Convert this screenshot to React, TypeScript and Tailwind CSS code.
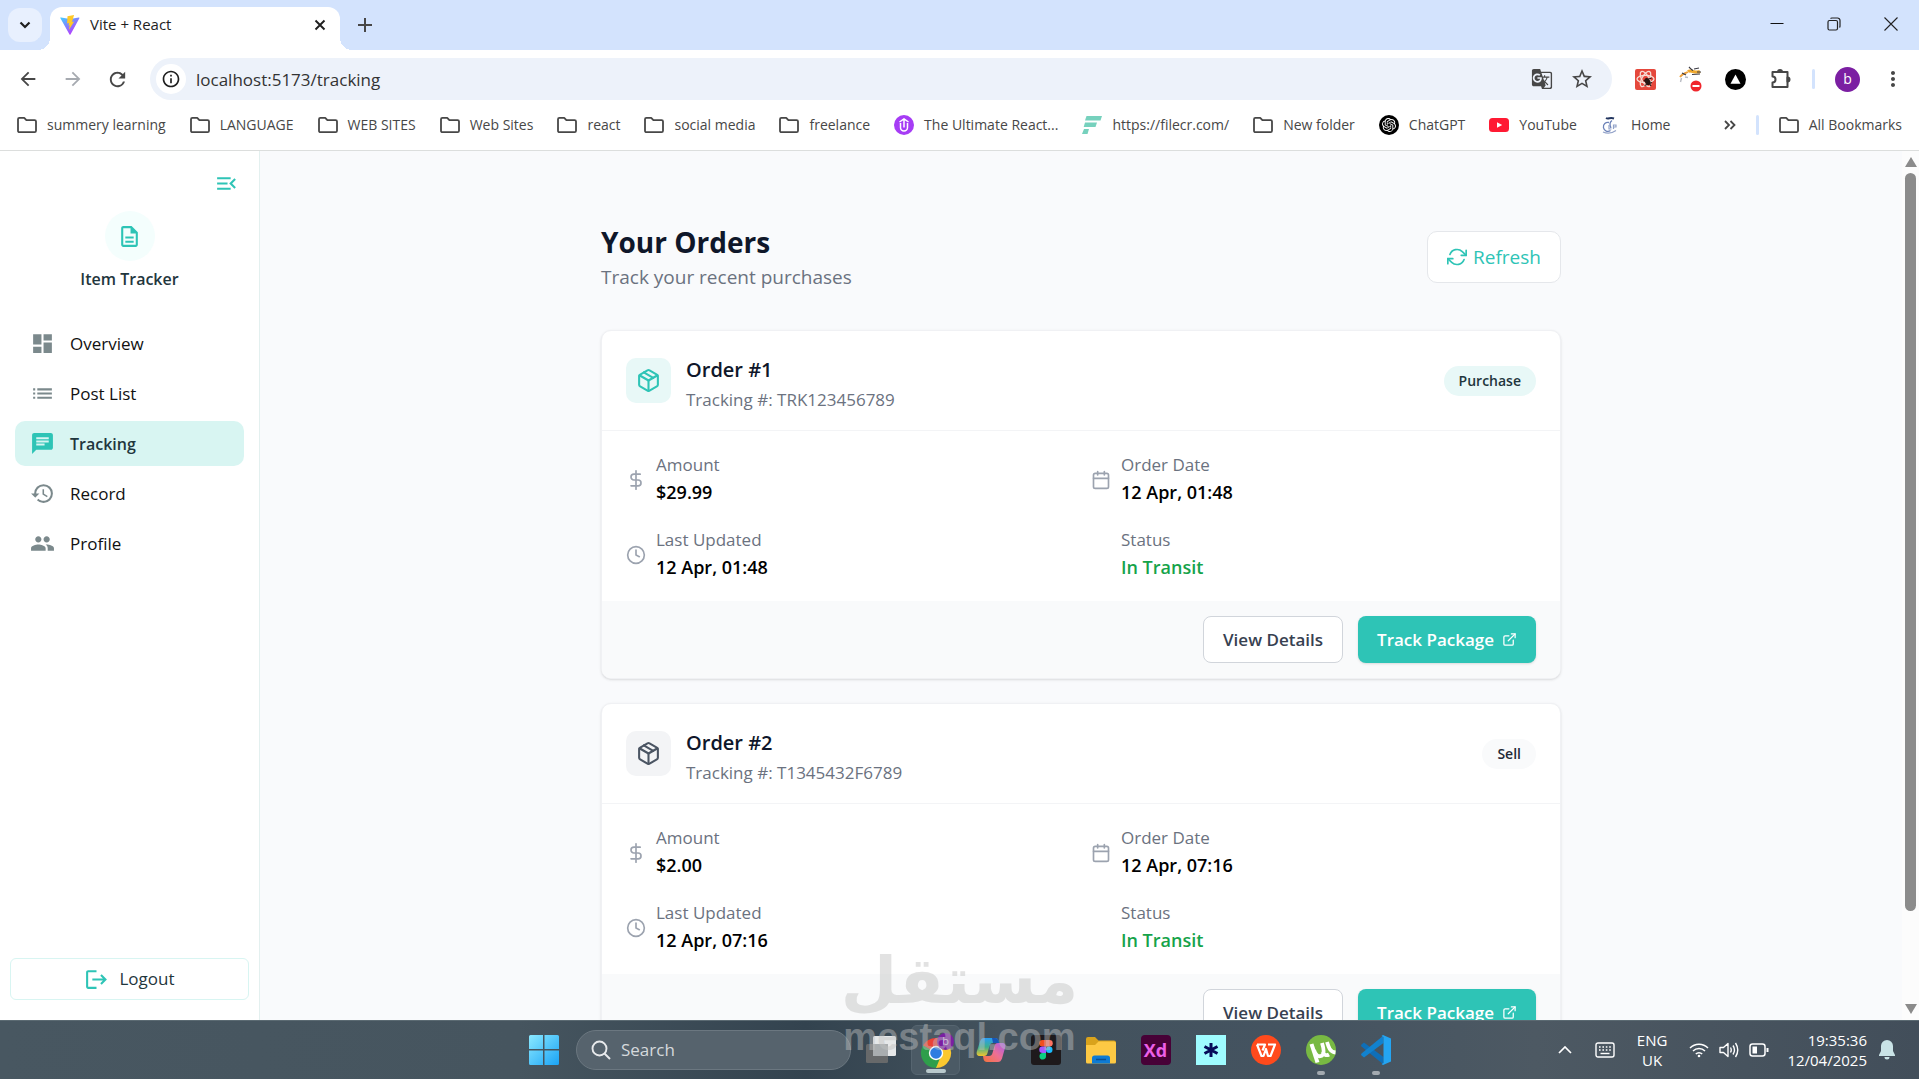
import { useState } from "react";
import type { ReactNode } from "react";
import {
  FiCalendar,
  FiClock,
  FiDollarSign,
  FiExternalLink,
  FiPackage,
  FiRefreshCw,
} from "react-icons/fi";
import {
  MdArrowBack,
  MdArrowForward,
  MdChat,
  MdDashboard,
  MdGTranslate,
  MdHistory,
  MdInfoOutline,
  MdList,
  MdLogout,
  MdMenuOpen,
  MdMoreVert,
  MdOutlineDescription,
  MdOutlineExtension,
  MdPeople,
  MdRefresh,
  MdStarBorder,
} from "react-icons/md";
import { SiOpenai } from "react-icons/si";

interface Order {
  id: number;
  tracking: string;
  type: "Purchase" | "Sell";
  amount: string;
  orderDate: string;
  lastUpdated: string;
  status: string;
}

const ORDERS: Order[] = [
  { id: 1, tracking: "TRK123456789", type: "Purchase", amount: "$29.99", orderDate: "12 Apr, 01:48", lastUpdated: "12 Apr, 01:48", status: "In Transit" },
  { id: 2, tracking: "T1345432F6789", type: "Sell", amount: "$2.00", orderDate: "12 Apr, 07:16", lastUpdated: "12 Apr, 07:16", status: "In Transit" },
];

const NAV = [
  { label: "Overview", icon: MdDashboard },
  { label: "Post List", icon: MdList },
  { label: "Tracking", icon: MdChat },
  { label: "Record", icon: MdHistory },
  { label: "Profile", icon: MdPeople },
];

/* ---------- browser icons ---------- */

function FolderIcon() {
  return (
    <svg viewBox="0 0 20 20" className="size-5 shrink-0" fill="none" stroke="#474747" strokeWidth="1.8" strokeLinejoin="round">
      <path d="M1 4.200a1.400 1.400 0 0 1 1.400-1.400h4.800l2.200 2.400h8.200A1.400 1.400 0 0 1 19 6.600v9.200a1.400 1.400 0 0 1-1.400 1.400H2.400A1.400 1.400 0 0 1 1 15.800z" />
    </svg>
  );
}

function ViteIcon() {
  return (
    <svg viewBox="0 0 32 32" className="size-5 shrink-0">
      <defs>
        <linearGradient id="vite" x1="0" y1="0" x2="0.7" y2="1">
          <stop offset="0" stopColor="#41d1ff" />
          <stop offset="1" stopColor="#bd34fe" />
        </linearGradient>
      </defs>
      <path d="M31 5.200 16.800 31a1 1 0 0 1-1.600 0L.700 5.200A1 1 0 0 1 1.700 3.800L16 6.300l14.100-2.500a1 1 0 0 1 .9 1.400z" fill="url(#vite)" />
      <path d="M22.500 0 12 2.100l-.7 11.300 3.200-.7-.9 4.300 2-.6-1.500 7.400 8.600-13.400-3.500.7z" fill="#ffc928" />
    </svg>
  );
}

function UltimateIcon() {
  return (
    <svg viewBox="0 0 20 20" className="size-5 shrink-0" fill="none">
      <circle cx="10" cy="10" r="10" fill="#a63cf5" />
      <path d="M6.500 8v4.500a3.500 3.500 0 0 0 7 0V8M10 12.500V5M5.500 7 10 3.800 14.500 7" stroke="#fff" strokeWidth="1.500" />
    </svg>
  );
}

function FilecrIcon() {
  return (
    <svg viewBox="0 0 20 20" className="size-5 shrink-0" fill="#76d1bd">
      <path d="M4.500 1H20l-1.500 4.500H3z" />
      <path d="M3 7.500h12L13.500 12H1.700z" />
      <path d="M2 14h5l-1.500 5H0z" />
    </svg>
  );
}

function YoutubeIcon() {
  return (
    <svg viewBox="0 0 20 20" className="size-5 shrink-0">
      <rect y="3" width="20" height="14" rx="3.500" fill="#ff1a33" />
      <path d="m8 7.200 5.200 2.800L8 12.800z" fill="#fff" />
    </svg>
  );
}

function HomeLogo() {
  return (
    <svg viewBox="0 0 20 20" className="size-5 shrink-0" fill="none">
      <path d="M8 7.500a4.500 4.500 0 1 0 1.500 8M11 5.500C9 7 8.500 10 10 13" stroke="#6c82b8" strokeWidth="1.300" />
      <path d="M5 3c2.500 1.500 4-1 8 .5" stroke="#22355f" strokeWidth="2" />
      <path d="M2 17c4 1.800 9 1.300 13-1.500M8 10v4h2.500M12.500 14v-4H15v2h-2.500" stroke="#93a3c9" strokeWidth="1.200" />
    </svg>
  );
}

function ReactExtIcon() {
  return (
    <svg viewBox="0 0 21 21" className="size-[21px]" fill="none">
      <rect width="21" height="21" rx="2" fill="#e5483c" />
      <g stroke="#f6ddd5" strokeWidth="1.300">
        <ellipse cx="10.500" cy="10" rx="8.500" ry="3.600" />
        <ellipse cx="10.500" cy="10" rx="8.500" ry="3.600" transform="rotate(60 10.500 10)" />
        <ellipse cx="10.500" cy="10" rx="8.500" ry="3.600" transform="rotate(120 10.500 10)" />
      </g>
      <ellipse cx="12.500" cy="12.500" rx="2.600" ry="3.600" transform="rotate(-35 12.500 12.500)" fill="#261512" />
      <path d="m8.500 12 8-3M9.500 16.500l7.500-3M11 9l5 8" stroke="#261512" strokeWidth="1.200" />
    </svg>
  );
}

function BlockerExtIcon() {
  return (
    <svg viewBox="0 0 24 28" className="h-7 w-6" fill="none">
      <path d="M9 6.500c3-2 7 2 12 0" stroke="#f0a92e" strokeWidth="3.200" />
      <path d="M1 12c2-3 4-3.500 8-5" stroke="#eda03a" strokeWidth="1.800" />
      <path d="M10 2c1.500 1.500 2 2.500 4 3.500M13 9.500l8-.5M3 8l4 2M15 4l5-1M18 7h4" stroke="#3a3a44" strokeWidth="1.200" />
      <path d="m2.500 13-1 4M6 12l3 .5" stroke="#b9bcc4" strokeWidth="1.400" />
      <circle cx="17" cy="21" r="5.500" fill="#f0262c" />
      <path d="M13.500 21h7" stroke="#fff" strokeWidth="2" />
    </svg>
  );
}

function TriangleExtIcon() {
  return (
    <svg viewBox="0 0 21 21" className="size-[21px]">
      <circle cx="10.500" cy="10.500" r="10.500" />
      <path d="m10.500 5.500 5 9.200h-10z" fill="#fff" />
    </svg>
  );
}

function PuzzleIcon() {
  return (
    <svg viewBox="0 0 22 22" className="size-[22px]" fill="none" stroke="#474747" strokeWidth="2" strokeLinejoin="round">
      <path d="M2.500 4h15v15h-15v-4.500a3 3 0 0 0 0-6z" />
      <path d="M8 4a2 2 0 0 1 4 0zM17.500 9.500a2 2 0 0 1 0 4z" fill="#474747" />
    </svg>
  );
}

/* ---------- taskbar icons ---------- */

function StartIcon() {
  return (
    <svg viewBox="0 0 30 30" className="size-[30px]">
      <defs>
        <linearGradient id="win" x1="0" y1="0" x2="1" y2="1">
          <stop offset="0" stopColor="#8be9ff" />
          <stop offset="1" stopColor="#1aa3f5" />
        </linearGradient>
      </defs>
      <path d="M1.500 0H14v14H0V1.500A1.500 1.500 0 0 1 1.500 0zM15.500 0h13A1.500 1.500 0 0 1 30 1.500V14H15.500zM0 15.500h14V30H1.500A1.500 1.500 0 0 1 0 28.500zM15.500 15.500H30v13a1.500 1.500 0 0 1-1.500 1.500h-13z" fill="url(#win)" />
    </svg>
  );
}

function TaskViewIcon() {
  return (
    <svg viewBox="0 0 30 30" className="size-[30px]">
      <rect x="0" y="9" width="22" height="19" rx="1.500" fill="#67696a" />
      <rect x="7" y="1" width="23" height="20" rx="1.500" fill="#e6e8e9" />
      <rect x="7" y="9" width="15" height="12" fill="#a9adaf" />
    </svg>
  );
}

function ChromeIcon() {
  return (
    <svg viewBox="0 0 36 36" className="size-9">
      <path d="M18 21 5 13.500A15 15 0 0 1 31 13.500z" fill="#ea4335" />
      <path d="M18 21 31 13.500A15 15 0 0 1 18 36z" fill="#fbc82f" />
      <path d="M18 21v15A15 15 0 0 1 5 13.500z" fill="#2f9e4b" />
      <path d="M18 21 9.500 24 5 13.500zM18 21l3.500 6.500L18 36z" fill="#2f9e4b" />
      <circle cx="18" cy="21" r="7.200" fill="#fff" />
      <circle cx="18" cy="21" r="5.800" fill="#2f7de1" />
      <circle cx="27.500" cy="9.500" r="8.500" fill="#7b1fa2" />
      <text x="27.500" y="13" textAnchor="middle" fontSize="11" fill="#d9c2e6">b</text>
    </svg>
  );
}

function CopilotIcon() {
  return (
    <svg viewBox="0 0 30 30" className="size-[30px]">
      <defs>
        <linearGradient id="cpa" x1="0" y1="0" x2="0" y2="1">
          <stop offset="0" stopColor="#2a9df4" />
          <stop offset="0.5" stopColor="#3cb08d" />
          <stop offset="1" stopColor="#f0c52e" />
        </linearGradient>
        <linearGradient id="cpb" x1="1" y1="0" x2="0" y2="1">
          <stop offset="0" stopColor="#a55cf0" />
          <stop offset="0.5" stopColor="#ee6f93" />
          <stop offset="1" stopColor="#f4743b" />
        </linearGradient>
      </defs>
      <path d="M8 3h11c2 0 3 1 3.500 3l.5 2h-6c-2 0-3 1-3.500 3l-2 7c-.5 2-1.500 3-3.500 3H4c-3 0-4-2-3-5l3-9.500C5 4 6 3 8 3z" fill="url(#cpa)" />
      <path d="M16 3h3c2 0 3 1 3.500 3l.5 2h-6z" fill="#1756b8" />
      <path d="M22 27H11c-2 0-3-1-3.500-3L7 21h6c2 0 3-1 3.500-3l2-7c.5-2 1.500-3 3.500-3h4c3 0 4 2 3 5l-3 10.500C25 26 24 27 22 27z" fill="url(#cpb)" />
    </svg>
  );
}

function FigmaIcon() {
  return (
    <svg viewBox="0 0 30 30" className="size-[30px]">
      <rect width="30" height="30" rx="3" fill="#1e1a1c" />
      <path d="M11.500 5H15v6.500h-3.500a3.250 3.250 0 0 1 0-6.500z" fill="#f24e1e" />
      <path d="M15 5h3.500a3.250 3.250 0 0 1 0 6.500H15z" fill="#ff7262" />
      <path d="M11.500 11.500H15V18h-3.500a3.250 3.250 0 0 1 0-6.500z" fill="#a259ff" />
      <circle cx="18.250" cy="14.750" r="3.250" fill="#1abcfe" />
      <path d="M11.500 18H15v3.300a3.250 3.250 0 1 1-3.500-3.300z" fill="#0acf83" />
    </svg>
  );
}

function ExplorerIcon() {
  return (
    <svg viewBox="0 0 30 30" className="size-[30px]">
      <path d="M0 4a2 2 0 0 1 2-2h7l3.500 3.500H28a2 2 0 0 1 2 2V14H0z" fill="#d9a31c" />
      <path d="M0 10h9l3.500-3.500H28a2 2 0 0 1 2 2V27a1.500 1.500 0 0 1-1.500 1.500h-27A1.500 1.500 0 0 1 0 27z" fill="#fdc944" />
      <path d="M6 28.500V23a2.500 2.500 0 0 1 2.500-2.500h13A2.500 2.500 0 0 1 24 23v5.500z" fill="#0f7bd3" />
      <path d="M10 24.500h10" stroke="#0a4f94" strokeWidth="1.500" />
    </svg>
  );
}

function AsteriskIcon() {
  return (
    <svg viewBox="0 0 30 30" className="size-[30px]">
      <rect width="30" height="30" fill="#9ffcff" />
      <path d="M15 8v14M8.500 11.500l13 7M21.500 11.500l-13 7" stroke="#060b59" strokeWidth="3" />
    </svg>
  );
}

function WpsIcon() {
  return (
    <svg viewBox="0 0 30 30" className="size-[30px]" fill="none">
      <circle cx="15" cy="15" r="15" fill="#ff4a1c" />
      <path d="M6 9.500h8l-2.500 6M6 9.500 10.500 21h2l2.500-7 2 7h2.500L24 9.500h-7" stroke="#fff" strokeWidth="2.200" strokeLinejoin="round" />
    </svg>
  );
}

function TorrentIcon() {
  return (
    <svg viewBox="0 0 30 30" className="size-[30px]" fill="none">
      <circle cx="15" cy="15" r="15" fill="#78b943" />
      <path d="m5.500 9 6 18.500" stroke="#fff" strokeWidth="4" />
      <path d="M8 15c1.500 5 4 7 7 6s3.500-5 1-13M16.500 17c1.500 3 4 4 6.500 2.500M21 7c1.500 5 3 10 8.500 10.500" stroke="#fff" strokeWidth="3.800" />
    </svg>
  );
}

function VsCodeIcon() {
  return (
    <svg viewBox="0 0 30 30" className="size-[30px]">
      <path d="m0 10 3-2.500L22.500 22v7.500L.500 11.500z" fill="#0f6fb8" />
      <path d="m0 20 3 2.500L22.500 8V.500L.500 18.500z" fill="#1182cf" />
      <path d="M22 0l8 3.500v23L22 30l-1.500-1 2-1V2l-2-1z" fill="#24a5f2" />
    </svg>
  );
}

const BOOKMARKS: { label: string; icon: ReactNode }[] = [
  { label: "summery learning", icon: <FolderIcon /> },
  { label: "LANGUAGE", icon: <FolderIcon /> },
  { label: "WEB SITES", icon: <FolderIcon /> },
  { label: "Web Sites", icon: <FolderIcon /> },
  { label: "react", icon: <FolderIcon /> },
  { label: "social media", icon: <FolderIcon /> },
  { label: "freelance", icon: <FolderIcon /> },
  { label: "The Ultimate React...", icon: <UltimateIcon /> },
  { label: "https://filecr.com/", icon: <FilecrIcon /> },
  { label: "New folder", icon: <FolderIcon /> },
  {
    label: "ChatGPT",
    icon: (
      <span className="flex size-5 shrink-0 items-center justify-center rounded-full bg-black">
        <SiOpenai className="size-3.5 text-white" />
      </span>
    ),
  },
  { label: "YouTube", icon: <YoutubeIcon /> },
  { label: "Home", icon: <HomeLogo /> },
];

const APPS: { name: string; icon: ReactNode; state?: "open" | "active" }[] = [
  { name: "Task View", icon: <TaskViewIcon /> },
  { name: "Google Chrome", icon: <ChromeIcon />, state: "active" },
  { name: "Copilot", icon: <CopilotIcon /> },
  { name: "Figma", icon: <FigmaIcon /> },
  { name: "File Explorer", icon: <ExplorerIcon /> },
  {
    name: "Adobe XD",
    icon: <span className="flex size-[30px] items-center justify-center rounded bg-[#470137] text-lg font-bold text-[#ec5fe8]">Xd</span>,
  },
  { name: "Asterisk", icon: <AsteriskIcon /> },
  { name: "WPS Office", icon: <WpsIcon /> },
  { name: "uTorrent", icon: <TorrentIcon />, state: "open" },
  { name: "Visual Studio Code", icon: <VsCodeIcon />, state: "open" },
];

function TabStrip() {
  return (
    <div className="flex h-[50px] shrink-0 items-start bg-[#d3e3fd]">
      <button aria-label="Search tabs" className="mt-2 ml-2 flex size-[34px] items-center justify-center rounded-xl bg-[#e8f0fe]">
        <svg viewBox="0 0 12 12" className="size-3" fill="none" stroke="#1f1f1f" strokeWidth="2.200">
          <path d="m1.500 3.500 4.500 4.500 4.500-4.500" />
        </svg>
      </button>
      <div className="relative mt-[7px] ml-2 flex h-[43px] w-[290px] items-center rounded-t-xl bg-white pr-3 pb-2 pl-2.5">
        <span className="absolute bottom-0 -left-3 size-3 bg-[radial-gradient(circle_at_0_0,#d3e3fd_12px,white_12px)]" />
        <span className="absolute -right-3 bottom-0 size-3 bg-[radial-gradient(circle_at_100%_0,#d3e3fd_12px,white_12px)]" />
        <ViteIcon />
        <span className="ml-2.5 flex-1 text-[15px] text-[#1f1f1f]">Vite + React</span>
        <button aria-label="Close tab" className="flex size-4 items-center justify-center">
          <svg viewBox="0 0 12 12" className="size-3" stroke="#1f1f1f" strokeWidth="1.900">
            <path d="m1.500 1.500 9 9M10.500 1.500l-9 9" />
          </svg>
        </button>
      </div>
      <button aria-label="New tab" className="mt-[18px] ml-[18px]">
        <svg viewBox="0 0 14 14" className="size-3.5" stroke="#474747" strokeWidth="2">
          <path d="M7 0v14M0 7h14" />
        </svg>
      </button>
      <div className="ml-auto flex h-12 items-center">
        <button aria-label="Minimize" className="flex w-[57px] justify-center">
          <svg viewBox="0 0 14 14" className="size-3.5" stroke="#111">
            <path d="M.5 6.500h13" />
          </svg>
        </button>
        <button aria-label="Restore" className="flex w-[57px] justify-center">
          <svg viewBox="0 0 14 14" className="size-3.5" fill="none" stroke="#222" strokeWidth="1.200">
            <rect x="1" y="3.500" width="9.500" height="9.500" rx="1.500" />
            <path d="M3.500 1.500A2 2 0 0 1 5 1h5.500A2.500 2.500 0 0 1 13 3.500V9a2 2 0 0 1-.5 1.500" />
          </svg>
        </button>
        <button aria-label="Close" className="flex w-[57px] justify-center">
          <svg viewBox="0 0 14 14" className="size-3.5" stroke="#222" strokeWidth="1.100">
            <path d="m.5.5 13 13M13.500.5l-13 13" />
          </svg>
        </button>
      </div>
    </div>
  );
}

function AddressBar() {
  return (
    <div className="flex h-[58px] shrink-0 items-center bg-white pr-1 pl-[5px] text-[#474747]">
      <button aria-label="Back" className="flex w-[45px] justify-center"><MdArrowBack className="size-[22px]" /></button>
      <button aria-label="Forward" className="flex w-[45px] justify-center text-[#a6aab0]"><MdArrowForward className="size-[22px]" /></button>
      <button aria-label="Reload" className="flex w-[45px] justify-center"><MdRefresh className="size-[23px]" /></button>
      <div className="ml-2.5 flex h-[42px] flex-1 items-center rounded-full bg-[#edf2fa] pr-[18px] pl-1.5">
        <button aria-label="Site information" className="flex size-[30px] items-center justify-center rounded-full bg-white text-[#1f1f1f]">
          <MdInfoOutline className="size-5" />
        </button>
        <input
          aria-label="Address"
          defaultValue="localhost:5173/tracking"
          className="ml-2.5 h-8 min-w-0 flex-1 bg-transparent text-[17px] text-[#333] outline-none"
        />
        <button aria-label="Translate"><MdGTranslate className="size-[22px]" /></button>
        <button aria-label="Bookmark this tab" className="ml-[17px]"><MdStarBorder className="size-6" /></button>
      </div>
      <div className="ml-[11px] flex items-center">
        <button aria-label="React extension" className="flex w-[45px] justify-center"><ReactExtIcon /></button>
        <button aria-label="Blocker extension" className="flex w-[45px] justify-center"><BlockerExtIcon /></button>
        <button aria-label="Triangle extension" className="flex w-[45px] justify-center"><TriangleExtIcon /></button>
        <button aria-label="Extensions" className="flex w-[45px] justify-center"><PuzzleIcon /></button>
        <span className="mr-2.5 ml-[9px] h-5 w-[3px] rounded bg-[#d3e3fd]" />
        <button className="mx-2.5 size-[25px] rounded-full bg-[#7b1fa2] text-sm text-white">b</button>
        <button aria-label="Menu" className="flex w-[45px] justify-center"><MdMoreVert className="size-6" /></button>
      </div>
    </div>
  );
}

function BookmarksBar() {
  return (
    <nav className="flex h-[43px] shrink-0 items-center border-b border-[#dcdedd] bg-white px-[17px] pb-2 text-sm whitespace-nowrap text-[#474747]">
      <div className="flex flex-1 items-center gap-6">
        {BOOKMARKS.map((b) => (
          <a key={b.label} href="#" className="flex items-center gap-2.5">
            {b.icon}
            {b.label}
          </a>
        ))}
      </div>
      <button aria-label="More bookmarks">
        <svg viewBox="0 0 12 10" className="h-2.5 w-3" fill="none" stroke="#474747" strokeWidth="1.800">
          <path d="m1 1 4 4-4 4M6.500 1l4 4-4 4" />
        </svg>
      </button>
      <span className="mx-5 h-5 w-[3px] rounded bg-[#d3e3fd]" />
      <a href="#" className="flex items-center gap-2.5">
        <FolderIcon />
        All Bookmarks
      </a>
    </nav>
  );
}

function Sidebar({ active, onSelect }: { active: string; onSelect: (label: string) => void }) {
  return (
    <aside className="flex w-[260px] shrink-0 flex-col border-r border-[#e3f0ef] bg-white">
      <button aria-label="Collapse sidebar" className="mt-5 mr-5 self-end text-[#2ec4b6]">
        <MdMenuOpen className="size-[25px]" />
      </button>
      <div className="mt-[15px] flex flex-col items-center">
        <span className="flex size-[50px] items-center justify-center rounded-full bg-[#f4fefd] text-[#2ec4b6]">
          <MdOutlineDescription className="size-[25px]" />
        </span>
        <h2 className="mt-1.5 text-base leading-[25px] font-semibold text-[#1f363d]">Item Tracker</h2>
      </div>
      <nav className="mt-[29px] flex flex-col gap-[5px] px-[15px]">
        {NAV.map(({ label, icon: Icon }) => (
          <a
            key={label}
            href="#"
            onClick={() => onSelect(label)}
            className={
              label === active
                ? "flex h-[45px] items-center gap-[15px] rounded-[10px] bg-[#d8f5f2] px-[15px] text-base font-semibold text-[#1f363d]"
                : "flex h-[45px] items-center gap-[15px] rounded-[10px] px-[15px] text-[17px] text-[#111]"
            }
          >
            <Icon className={label === active ? "size-[25px] text-[#2ec4b6]" : "size-[25px] text-[#7b898c]"} />
            {label}
          </a>
        ))}
      </nav>
      <button className="mx-2.5 mt-auto mb-5 flex h-[42px] items-center justify-center gap-2.5 rounded-md border border-[#d8f5f2] text-[17px] text-[#1f363d]">
        <MdLogout className="size-[25px] text-[#2ec4b6]" />
        Logout
      </button>
    </aside>
  );
}

function Field({ icon, label, value, green }: { icon?: ReactNode; label: string; value: string; green?: boolean }) {
  return (
    <div className="flex items-center gap-2.5">
      <span className="size-5 text-[#9ca3af]">{icon}</span>
      <div>
        <p className="text-[17px] leading-[25px] text-[#6b7280]">{label}</p>
        <p className={green ? "text-lg leading-[30px] font-semibold text-[#16a34a]" : "text-lg leading-[30px] font-semibold text-black"}>{value}</p>
      </div>
    </div>
  );
}

function OrderCard({ order }: { order: Order }) {
  const purchase = order.type === "Purchase";
  return (
    <article className="shrink-0 overflow-hidden rounded-[10px] border border-[#f0f1f4] bg-white shadow-sm">
      <div className="flex h-[100px] items-center border-b border-[#f3f4f6] px-6">
        <span
          className={
            purchase
              ? "flex size-[45px] items-center justify-center rounded-[10px] bg-[#e8f8f7] text-[#2ec4b6]"
              : "flex size-[45px] items-center justify-center rounded-[10px] bg-[#f3f4f6] text-[#4b5563]"
          }
        >
          <FiPackage className="size-[25px]" />
        </span>
        <div className="ml-[15px] flex-1 pt-0.5">
          <h2 className="text-xl leading-[35px] font-semibold text-[#0f172a]">Order #{order.id}</h2>
          <p className="text-[17px] leading-[25px] text-[#6b7280]">Tracking #: {order.tracking}</p>
        </div>
        <span
          className={
            purchase
              ? "rounded-full bg-[#e8f8f7] px-[15px] py-[5px] text-sm font-semibold text-[#1f363d]"
              : "rounded-full bg-[#f9fafb] px-[15px] py-[5px] text-sm font-semibold text-[#1f2937]"
          }
        >
          {order.type}
        </span>
      </div>
      <div className="grid grid-cols-2 gap-5 px-6 pt-[21px] pb-[19px]">
        <Field icon={<FiDollarSign className="size-5" />} label="Amount" value={order.amount} />
        <Field icon={<FiCalendar className="size-5" />} label="Order Date" value={order.orderDate} />
        <Field icon={<FiClock className="size-5" />} label="Last Updated" value={order.lastUpdated} />
        <Field label="Status" value={order.status} green />
      </div>
      <div className="flex justify-end gap-[15px] bg-[#f9fafb] px-6 py-[15px]">
        <button className="h-[47px] rounded-lg border border-[#d1d5db] bg-white px-[19px] text-[17px] font-semibold text-[#374151]">View Details</button>
        <button className="flex h-[47px] items-center gap-2 rounded-lg bg-[#2ec4b6] px-[19px] text-[17px] font-semibold text-white shadow-sm">
          Track Package
          <FiExternalLink className="size-[15px]" />
        </button>
      </div>
    </article>
  );
}

function Scrollbar() {
  return (
    <div className="flex w-[17px] shrink-0 flex-col items-center bg-[#fcfcfc] py-1.5">
      <svg viewBox="0 0 12 10" className="h-2.5 w-3" fill="#8b8b8b"><path d="M6 0 12 10H0z" /></svg>
      <div className="mt-1.5 h-[738px] w-[11px] rounded-full bg-[#8b8b8b]" />
      <svg viewBox="0 0 12 10" className="mt-auto h-2.5 w-3" fill="#8b8b8b"><path d="M0 0h12L6 10z" /></svg>
    </div>
  );
}

function Taskbar() {
  return (
    <footer className="grid h-[59px] shrink-0 grid-cols-[1fr_auto_1fr] items-center border-t border-[#5b6a72] bg-[linear-gradient(90deg,#485761_0%,#46555f_27%,#33434f_42%,#43525d_52%,#445360_68%,#4d5963_80%,#424e5a_100%)] text-white">
      <span />
      <div className="flex items-center pl-[13px]">
        <button aria-label="Start"><StartIcon /></button>
        <label className="ml-[17px] flex h-10 w-[275px] items-center rounded-full border border-[#6b7780] bg-[#56636d] pl-3.5">
          <svg viewBox="0 0 20 20" className="size-5" fill="none" stroke="#e8eaec" strokeWidth="1.900">
            <circle cx="8.500" cy="8.500" r="7" />
            <path d="m13.500 13.500 5.500 5.500" />
          </svg>
          <input aria-label="Search" placeholder="Search" className="ml-2.5 w-40 bg-transparent text-[17px] outline-none placeholder:text-[#d5d9dc]" />
        </label>
        <div className="flex pl-0.5">
          {APPS.map((app) => (
            <button
              key={app.name}
              aria-label={app.name}
              className="relative flex h-[50px] w-[55px] items-center justify-center"
            >
              {app.state === "active" && <span className="absolute inset-x-[3px] inset-y-0 rounded-md border border-[#566570] bg-[#4b5a65]" />}
              <span className="relative">{app.icon}</span>
              {app.state === "active" && <span className="absolute bottom-0.5 h-1 w-5 rounded-full bg-[#b9c9cc]" />}
              {app.state === "open" && <span className="absolute bottom-0 h-1 w-2 rounded-full bg-[#a3aab0]" />}
            </button>
          ))}
        </div>
      </div>
      <div className="flex items-center justify-end pr-6 text-[15px] leading-5">
        <button aria-label="Hidden icons">
          <svg viewBox="0 0 14 8" className="h-2 w-3.5" fill="none" stroke="#fff" strokeWidth="1.700"><path d="m1 7 6-6 6 6" /></svg>
        </button>
        <svg viewBox="0 0 20 16" className="ml-[23px] h-4 w-5" fill="none" stroke="#fff" strokeWidth="1.400">
          <rect x="1" y="1" width="18" height="14" rx="2" />
          <path d="M4 5h12M4 8h12" strokeDasharray="1.600 1.800" />
          <path d="M5.500 11.500h9" />
        </svg>
        <span className="ml-[22px] text-center">ENG<br />UK</span>
        <svg viewBox="0 0 20 16" className="ml-[22px] h-4 w-5" fill="none" stroke="#fff" strokeWidth="1.500">
          <path d="M1 6a12.500 12.500 0 0 1 18 0M4 9a8.500 8.500 0 0 1 12 0M6.800 12a4.500 4.500 0 0 1 6.400 0" />
          <circle cx="10" cy="14" r="1.300" fill="#fff" stroke="none" />
        </svg>
        <svg viewBox="0 0 20 18" className="ml-2.5 h-[18px] w-5" fill="none" stroke="#fff" strokeWidth="1.400" strokeLinejoin="round">
          <path d="M1 6.500h3.500L9 2.500v13L4.500 11.500H1z" />
          <path d="M11.500 6.500q1.500 2.500 0 5M14 4.500q3 4.500 0 9M16.500 2q4.500 7 0 14" />
        </svg>
        <svg viewBox="0 0 20 14" className="ml-2.5 h-3.5 w-5" fill="none" stroke="#fff" strokeWidth="1.500">
          <rect x="1" y="1" width="15" height="12" rx="2.500" />
          <path d="M18.500 5v4" strokeWidth="2" />
          <rect x="3.500" y="3.500" width="4.500" height="7" fill="#fff" stroke="none" />
        </svg>
        <time className="ml-[18px] text-right">19:35:36<br />12/04/2025</time>
        <svg viewBox="0 0 16 20" className="ml-3 h-5 w-4" fill="#c9e3e6">
          <path d="M8 0a6 6 0 0 1 6 6v5l2 4v1H0v-1l2-4V6a6 6 0 0 1 6-6zM5.500 17h5a2.500 2.500 0 0 1-5 0z" />
        </svg>
      </div>
    </footer>
  );
}

function Watermark() {
  return (
    <div className="pointer-events-none absolute inset-x-0 bottom-5 z-10 flex flex-col items-center text-[#c1c1c1] opacity-45">
      <span lang="ar" dir="rtl" className="font-['DejaVu_Sans',sans-serif] text-[65px] leading-[68px] font-bold">مستقل</span>
      <span className="font-['Liberation_Sans',sans-serif] text-[38px] leading-[44px] font-bold">mestaql.com</span>
    </div>
  );
}

export default function App() {
  const [active, setActive] = useState("Tracking");

  return (
    <div className="relative flex h-screen flex-col overflow-hidden font-['Open_Sans','Noto_Sans',sans-serif]">
      <TabStrip />
      <AddressBar />
      <BookmarksBar />
      <div className="flex min-h-0 flex-1">
        <Sidebar active={active} onSelect={setActive} />
        <main className="flex-1 overflow-hidden bg-[#f9fafc]">
          <div className="mx-auto flex max-w-[960px] flex-col gap-6 pt-[71px]">
            <header className="mb-3.5 flex items-center justify-between">
              <div>
                <h1 className="text-[28px] leading-10 font-bold text-[#0f172a]">Your Orders</h1>
                <p className="text-[19px] leading-[30px] text-[#6b7280]">Track your recent purchases</p>
              </div>
              <button className="flex h-[52px] items-center gap-1.5 rounded-[10px] border border-[#e5e7eb] bg-white px-[19px] text-[19px] text-[#2ec4b6]">
                <FiRefreshCw className="size-5" />
                Refresh
              </button>
            </header>
            {ORDERS.map((order) => (
              <OrderCard key={order.id} order={order} />
            ))}
          </div>
        </main>
        <Scrollbar />
      </div>
      <Taskbar />
      <Watermark />
    </div>
  );
}
